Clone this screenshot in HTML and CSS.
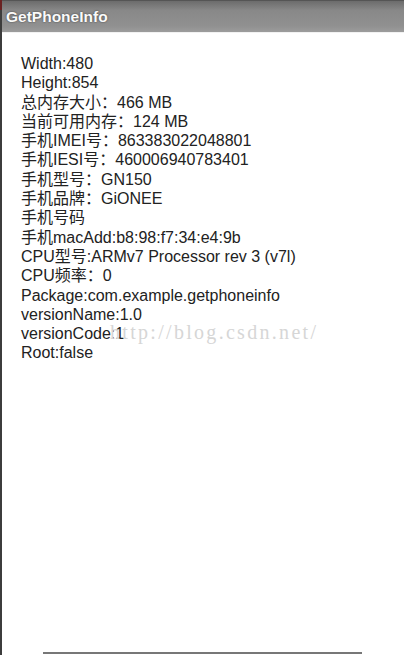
FILE: index.html
```html
<!DOCTYPE html>
<html lang="zh-CN">
<head>
    <meta charset="UTF-8">
    <meta name="viewport" content="width=device-width, initial-scale=1.0">
    <title>GetPhoneInfo</title>
    <link rel="stylesheet" href="styles.css">
</head>
<body>
    <div class="screen">
        <div class="title-bar">GetPhoneInfo</div>

        <div class="content">
            <div class="info">
                <p>Width:480</p>
                <p>Height:854</p>
                <p>总内存大小：466 MB</p>
                <p>当前可用内存：124 MB</p>
                <p>手机IMEI号：863383022048801</p>
                <p>手机IESI号：460006940783401</p>
                <p>手机型号：GN150</p>
                <p>手机品牌：GiONEE</p>
                <p>手机号码</p>
                <p>手机macAdd:b8:98:f7:34:e4:9b</p>
                <p>CPU型号:ARMv7 Processor rev 3 (v7l)</p>
                <p>CPU频率：0</p>
                <p>Package:com.example.getphoneinfo</p>
                <p>versionName:1.0</p>
                <p>versionCode:1</p>
                <p>Root:false</p>
            </div>
            <!-- watermark from the screenshot source -->
            <span class="watermark">http://blog.csdn.net/</span>
        </div>

        <div class="bottom-line"></div>
    </div>
</body>
</html>
```

FILE: styles.css
```css
body {
    margin: 0;
    background-color: #ffffff;
    font-family: "Liberation Sans", "Noto Sans CJK SC", sans-serif;
}

.screen {
    height: 655px;
    display: flex;
    flex-direction: column;
    border-left: 2px solid #3c3c3c;
    box-sizing: border-box;
    position: relative;
}

.screen::before {
    content: "";
    position: absolute;
    left: -2px;
    top: 0;
    width: 2px;
    height: 10px;
    background-color: #6a2222;
}

.title-bar {
    height: 31px;
    line-height: 31px;
    padding-left: 4px;
    background: linear-gradient(#6c6c6c, #888888 30%, #909090 80%, #9c9c9c);
    border-top: 1px solid #555555;
    border-bottom: 1px solid #f2f2f2;
    color: #fafafa;
    font-size: 15.5px;
    font-weight: bold;
    text-shadow: 0 0 2px rgba(0, 0, 0, 0.6);
}

.content {
    flex: 1;
    position: relative;
    padding: 21px 0 0 19px;
}

.info p {
    margin: 0;
    font-size: 16px;
    line-height: 19.3px;
    color: #222222;
}

.watermark {
    position: absolute;
    left: 108px;
    top: 288px;
    font-family: "Liberation Serif", serif;
    font-size: 20px;
    letter-spacing: 2.3px;
    color: #d6d6d6;
}

.bottom-line {
    height: 2px;
    margin: 0 42px 1px 41px;
    background-color: #777777;
}
```
